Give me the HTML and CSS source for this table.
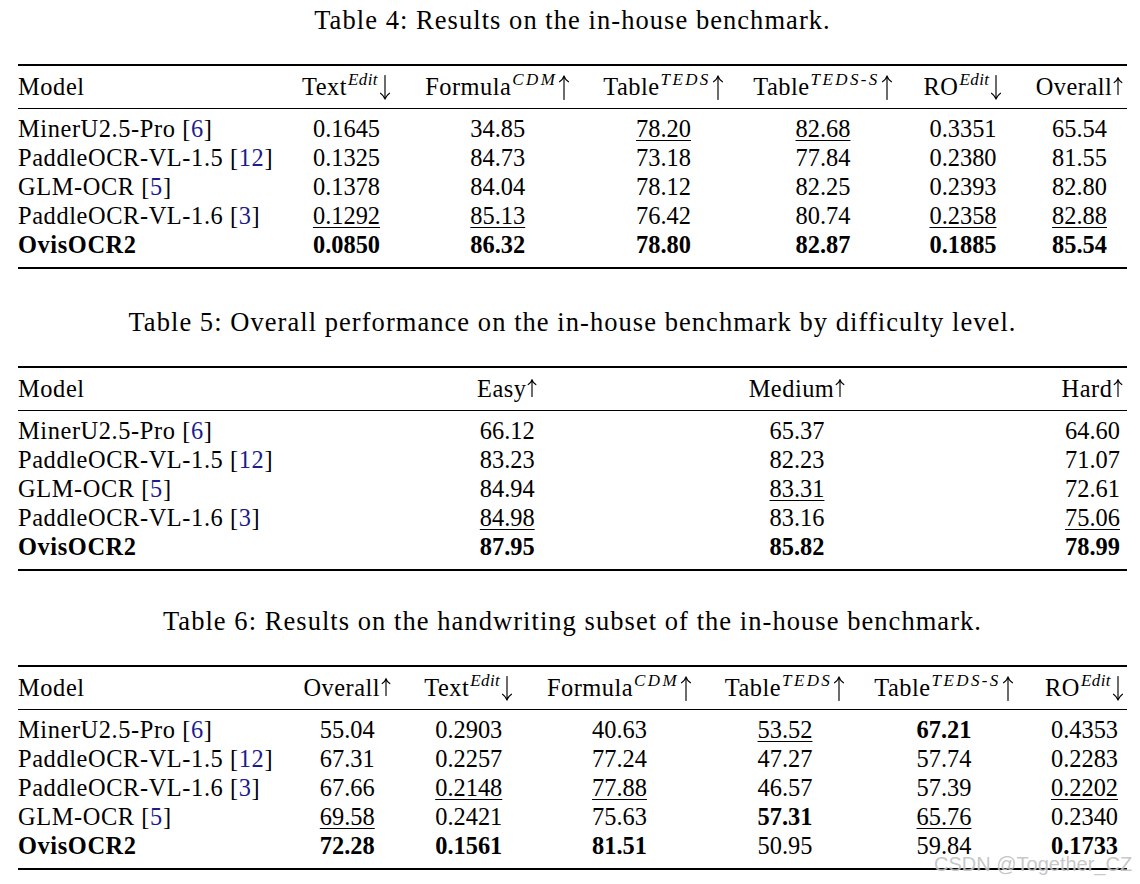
FILE: index.html
```html
<!DOCTYPE html>
<html lang="en">
<head>
<meta charset="utf-8">
<title>Results tables</title>
<link rel="stylesheet" href="styles.css">
</head>
<body>
<main class="page">

  <section class="block block-first">
    <div class="caption">Table 4: Results on the in-house benchmark.</div>
    <div class="table t4">
      <div class="row head">
        <div class="c name">Model</div>
        <div class="c">Text<sup class="ed">Edit</sup><svg class="arr" viewBox="0 0 12 25" aria-label="↓"><path d="M6 0.5V24M1.5 18.2Q4.8 20.4 6 24.2Q7.2 20.4 10.5 18.2"/></svg></div>
        <div class="c">Formula<sup class="mi">CDM</sup><svg class="arr" viewBox="0 0 12 25" aria-label="↑"><path d="M6 24.5V1M1.5 6.8Q4.8 4.6 6 0.8Q7.2 4.6 10.5 6.8"/></svg></div>
        <div class="c">Table<sup class="mi">TEDS</sup><svg class="arr" viewBox="0 0 12 25" aria-label="↑"><path d="M6 24.5V1M1.5 6.8Q4.8 4.6 6 0.8Q7.2 4.6 10.5 6.8"/></svg></div>
        <div class="c">Table<sup class="mi">TEDS-S</sup><svg class="arr" viewBox="0 0 12 25" aria-label="↑"><path d="M6 24.5V1M1.5 6.8Q4.8 4.6 6 0.8Q7.2 4.6 10.5 6.8"/></svg></div>
        <div class="c">RO<sup class="ed">Edit</sup><svg class="arr" viewBox="0 0 12 25" aria-label="↓"><path d="M6 0.5V24M1.5 18.2Q4.8 20.4 6 24.2Q7.2 20.4 10.5 18.2"/></svg></div>
        <div class="c last">Overall<svg class="tarr" viewBox="0 0 10 18" aria-label="↑"><path d="M5 18V1M1.2 5.6Q4 3.8 5 0.6Q6 3.8 8.8 5.6"/></svg></div>
      </div>
      <div class="body">
        <div class="row">
          <div class="c name">MinerU2.5-Pro [<span class="cite">6</span>]</div>
          <div class="c num">0.1645</div><div class="c num">34.85</div><div class="c num"><u>78.20</u></div><div class="c num"><u>82.68</u></div><div class="c num">0.3351</div><div class="c num last">65.54</div>
        </div>
        <div class="row">
          <div class="c name">PaddleOCR-VL-1.5 [<span class="cite">12</span>]</div>
          <div class="c num">0.1325</div><div class="c num">84.73</div><div class="c num">73.18</div><div class="c num">77.84</div><div class="c num">0.2380</div><div class="c num last">81.55</div>
        </div>
        <div class="row">
          <div class="c name">GLM-OCR [<span class="cite">5</span>]</div>
          <div class="c num">0.1378</div><div class="c num">84.04</div><div class="c num">78.12</div><div class="c num">82.25</div><div class="c num">0.2393</div><div class="c num last">82.80</div>
        </div>
        <div class="row">
          <div class="c name">PaddleOCR-VL-1.6 [<span class="cite">3</span>]</div>
          <div class="c num"><u>0.1292</u></div><div class="c num"><u>85.13</u></div><div class="c num">76.42</div><div class="c num">80.74</div><div class="c num"><u>0.2358</u></div><div class="c num last"><u>82.88</u></div>
        </div>
        <div class="row">
          <div class="c name"><b>OvisOCR2</b></div>
          <div class="c num"><b>0.0850</b></div><div class="c num"><b>86.32</b></div><div class="c num"><b>78.80</b></div><div class="c num"><b>82.87</b></div><div class="c num"><b>0.1885</b></div><div class="c num last"><b>85.54</b></div>
        </div>
      </div>
    </div>
  </section>

  <section class="block">
    <div class="caption">Table 5: Overall performance on the in-house benchmark by difficulty level.</div>
    <div class="table t5">
      <div class="row head">
        <div class="c name">Model</div>
        <div class="c">Easy<svg class="tarr" viewBox="0 0 10 18" aria-label="↑"><path d="M5 18V1M1.2 5.6Q4 3.8 5 0.6Q6 3.8 8.8 5.6"/></svg></div>
        <div class="c">Medium<svg class="tarr" viewBox="0 0 10 18" aria-label="↑"><path d="M5 18V1M1.2 5.6Q4 3.8 5 0.6Q6 3.8 8.8 5.6"/></svg></div>
        <div class="c last">Hard<svg class="tarr" viewBox="0 0 10 18" aria-label="↑"><path d="M5 18V1M1.2 5.6Q4 3.8 5 0.6Q6 3.8 8.8 5.6"/></svg></div>
      </div>
      <div class="body">
        <div class="row">
          <div class="c name">MinerU2.5-Pro [<span class="cite">6</span>]</div>
          <div class="c num">66.12</div><div class="c num">65.37</div><div class="c num last">64.60</div>
        </div>
        <div class="row">
          <div class="c name">PaddleOCR-VL-1.5 [<span class="cite">12</span>]</div>
          <div class="c num">83.23</div><div class="c num">82.23</div><div class="c num last">71.07</div>
        </div>
        <div class="row">
          <div class="c name">GLM-OCR [<span class="cite">5</span>]</div>
          <div class="c num">84.94</div><div class="c num"><u>83.31</u></div><div class="c num last">72.61</div>
        </div>
        <div class="row">
          <div class="c name">PaddleOCR-VL-1.6 [<span class="cite">3</span>]</div>
          <div class="c num"><u>84.98</u></div><div class="c num">83.16</div><div class="c num last"><u>75.06</u></div>
        </div>
        <div class="row">
          <div class="c name"><b>OvisOCR2</b></div>
          <div class="c num"><b>87.95</b></div><div class="c num"><b>85.82</b></div><div class="c num last"><b>78.99</b></div>
        </div>
      </div>
    </div>
  </section>

  <section class="block block-last">
    <div class="caption">Table 6: Results on the handwriting subset of the in-house benchmark.</div>
    <div class="table t6">
      <div class="row head">
        <div class="c name">Model</div>
        <div class="c">Overall<svg class="tarr" viewBox="0 0 10 18" aria-label="↑"><path d="M5 18V1M1.2 5.6Q4 3.8 5 0.6Q6 3.8 8.8 5.6"/></svg></div>
        <div class="c">Text<sup class="ed">Edit</sup><svg class="arr" viewBox="0 0 12 25" aria-label="↓"><path d="M6 0.5V24M1.5 18.2Q4.8 20.4 6 24.2Q7.2 20.4 10.5 18.2"/></svg></div>
        <div class="c">Formula<sup class="mi">CDM</sup><svg class="arr" viewBox="0 0 12 25" aria-label="↑"><path d="M6 24.5V1M1.5 6.8Q4.8 4.6 6 0.8Q7.2 4.6 10.5 6.8"/></svg></div>
        <div class="c">Table<sup class="mi">TEDS</sup><svg class="arr" viewBox="0 0 12 25" aria-label="↑"><path d="M6 24.5V1M1.5 6.8Q4.8 4.6 6 0.8Q7.2 4.6 10.5 6.8"/></svg></div>
        <div class="c">Table<sup class="mi">TEDS-S</sup><svg class="arr" viewBox="0 0 12 25" aria-label="↑"><path d="M6 24.5V1M1.5 6.8Q4.8 4.6 6 0.8Q7.2 4.6 10.5 6.8"/></svg></div>
        <div class="c last">RO<sup class="ed">Edit</sup><svg class="arr" viewBox="0 0 12 25" aria-label="↓"><path d="M6 0.5V24M1.5 18.2Q4.8 20.4 6 24.2Q7.2 20.4 10.5 18.2"/></svg></div>
      </div>
      <div class="body">
        <div class="row">
          <div class="c name">MinerU2.5-Pro [<span class="cite">6</span>]</div>
          <div class="c num">55.04</div><div class="c num">0.2903</div><div class="c num">40.63</div><div class="c num"><u>53.52</u></div><div class="c num"><b>67.21</b></div><div class="c num last">0.4353</div>
        </div>
        <div class="row">
          <div class="c name">PaddleOCR-VL-1.5 [<span class="cite">12</span>]</div>
          <div class="c num">67.31</div><div class="c num">0.2257</div><div class="c num">77.24</div><div class="c num">47.27</div><div class="c num">57.74</div><div class="c num last">0.2283</div>
        </div>
        <div class="row">
          <div class="c name">PaddleOCR-VL-1.6 [<span class="cite">3</span>]</div>
          <div class="c num">67.66</div><div class="c num"><u>0.2148</u></div><div class="c num"><u>77.88</u></div><div class="c num">46.57</div><div class="c num">57.39</div><div class="c num last"><u>0.2202</u></div>
        </div>
        <div class="row">
          <div class="c name">GLM-OCR [<span class="cite">5</span>]</div>
          <div class="c num"><u>69.58</u></div><div class="c num">0.2421</div><div class="c num">75.63</div><div class="c num"><b>57.31</b></div><div class="c num"><u>65.76</u></div><div class="c num last">0.2340</div>
        </div>
        <div class="row">
          <div class="c name"><b>OvisOCR2</b></div>
          <div class="c num"><b>72.28</b></div><div class="c num"><b>0.1561</b></div><div class="c num"><b>81.51</b></div><div class="c num">50.95</div><div class="c num">59.84</div><div class="c num last"><b>0.1733</b></div>
        </div>
      </div>
    </div>
  </section>

  <div class="watermark">CSDN @Together_CZ</div>
</main>
</body>
</html>
```

FILE: styles.css
```css
html, body {
  margin: 0;
  padding: 0;
  background: #ffffff;
}

body {
  width: 1140px;
  height: 884px;
  overflow: hidden;
  font-family: "Liberation Serif", "Times New Roman", serif;
  color: #000;
}

.page {
  position: relative;
  width: 1109px;
  height: 884px;
  padding: 4px 13px 0 18px;
  box-sizing: content-box;
}

.block {
  margin-top: 37px;
}

.block-first {
  margin-top: 0;
}

.block-last {
  margin-top: 34px;
}

.caption {
  font-size: 26.5px;
  line-height: 32px;
  letter-spacing: 1.05px;
  text-align: center;
  margin-bottom: 28px;
}

.table {
  border-top: 2px solid #000;
  border-bottom: 2px solid #000;
  font-size: 24.4px;
  line-height: 29px;
}

.row {
  display: grid;
}

.head {
  padding: 6px 0 7px;
  border-bottom: 1px solid #000;
}

.body {
  padding: 5px 0 8px;
}

.t4 .row {
  grid-template-columns: 268px 121px 181.5px 150px 169px 111px 108.5px;
}

.t5 .row {
  grid-template-columns: 356.5px 265.5px 314px 173px;
}

.t6 .row {
  grid-template-columns: 268px 122.5px 120.5px 181px 150px 168px 99px;
}

.c {
  text-align: center;
  white-space: nowrap;
  letter-spacing: 0.5px;
}

.c.name {
  text-align: left;
  letter-spacing: 0.6px;
}

.c.num {
  letter-spacing: 0;
}

.t4 .c.last {
  padding-left: 13.5px;
}

.t5 .c.last {
  padding-left: 104px;
}

.t6 .c.last {
  padding-left: 14px;
}

sup {
  font-style: italic;
  font-size: 17px;
  line-height: 0;
  vertical-align: 10px;
  margin-left: 1px;
}

sup.ed {
  letter-spacing: 0.4px;
}

sup.mi {
  letter-spacing: 2.4px;
}

.arr {
  width: 12px;
  height: 25px;
  vertical-align: -5px;
  margin-left: 1px;
}

.tarr {
  width: 10px;
  height: 18px;
  vertical-align: 0;
  margin-left: 1px;
}

.arr path,
.tarr path {
  fill: none;
  stroke: #000;
  stroke-width: 1.15;
  stroke-linecap: round;
  stroke-linejoin: round;
}

.cite {
  color: #1c1c8c;
}

u {
  text-decoration: underline;
  text-decoration-thickness: 1px;
  text-underline-offset: 3px;
}

b {
  font-weight: bold;
}

.watermark {
  position: absolute;
  left: 934px;
  top: 853px;
  font-family: "Liberation Sans", Arial, sans-serif;
  font-size: 20px;
  line-height: 23px;
  color: rgba(150, 150, 150, 0.55);
  white-space: nowrap;
  text-shadow: 0 0 1px rgba(255, 255, 255, 0.9);
}
```
